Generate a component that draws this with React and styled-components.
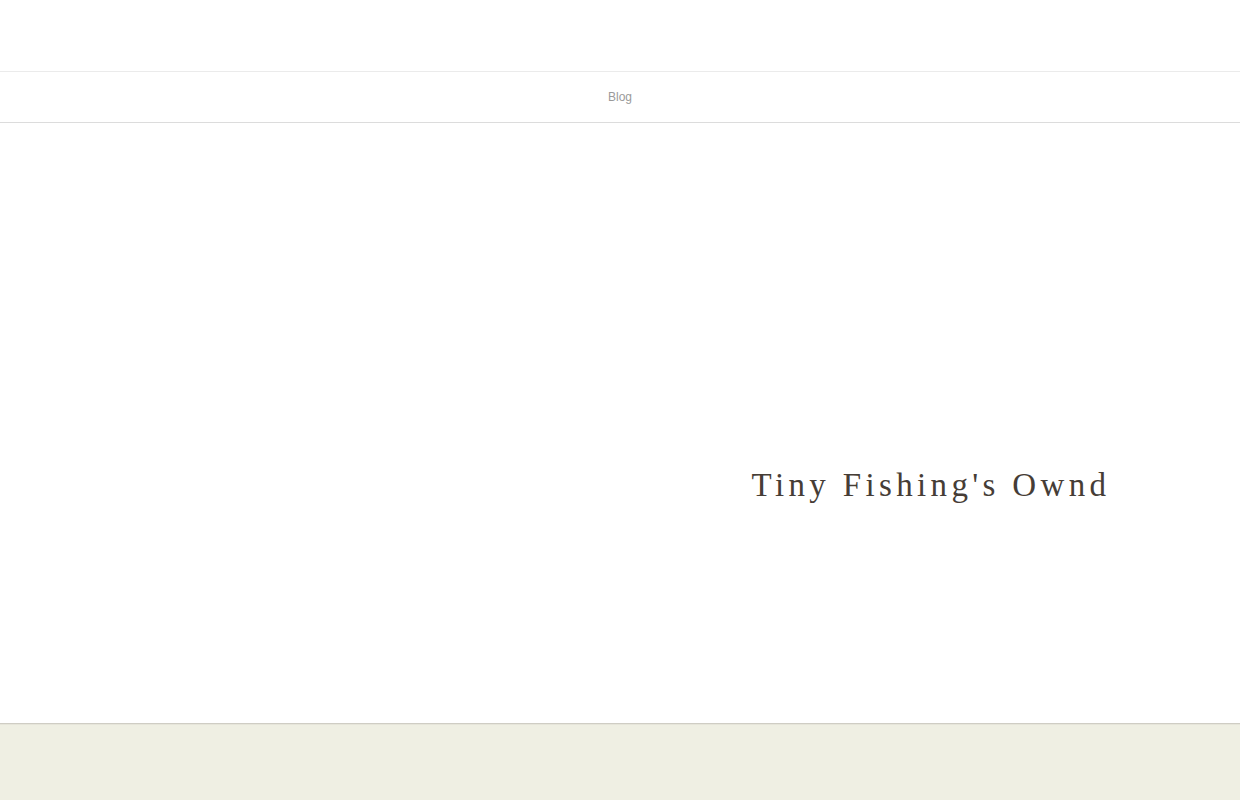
import React from 'react'
import styled, { createGlobalStyle } from 'styled-components';

const GlobalStyle = createGlobalStyle`
    html, body {
        margin: 0;
        padding: 0;
        background: #fff;
    }
    body {
        font-family: "Liberation Sans", Arial, sans-serif;
    }
`;

const Page = styled.div`
    width: 100%;
    min-height: 100vh;
    display: flex;
    flex-direction: column;
`;

const Header = styled.header`
    height: 71px;
    border-bottom: 1px solid #ebebeb;
`;

const Nav = styled.nav`
    height: 50px;
    display: flex;
    align-items: center;
    justify-content: center;
    border-bottom: 1px solid #dcdcdc;
    a {
        font-size: 12px;
        color: #9a9a9a;
        text-decoration: none;
        margin-top: -1px;
    }
`;

const Hero = styled.section`
    height: 600px;
    display: grid;
    grid-template-columns: 1fr 1fr;
    border-bottom: 1px solid #cfcdc4;
`;

const TitleCell = styled.div`
    grid-column: 2;
    display: flex;
    align-items: center;
    justify-content: center;
    padding-top: 124px;
`;

const Title = styled.h1`
    margin: 0;
    font-family: "Liberation Serif", "Times New Roman", serif;
    font-weight: 400;
    font-size: 33px;
    letter-spacing: 4.35px;
    color: #463d36;
    padding-left: 2px;
`;

const Footer = styled.footer`
    flex: 1;
    background: #efefe3;
    border-top: 1px solid #e6e5da;
`;

const App = () => {
    return (
        <Page>
            <GlobalStyle />
            <Header />
            <Nav>
                <a href='#'>Blog</a>
            </Nav>
            <Hero>
                <TitleCell>
                    <Title>Tiny Fishing's Ownd</Title>
                </TitleCell>
            </Hero>
            <Footer />
        </Page>
    )
}

export default App
